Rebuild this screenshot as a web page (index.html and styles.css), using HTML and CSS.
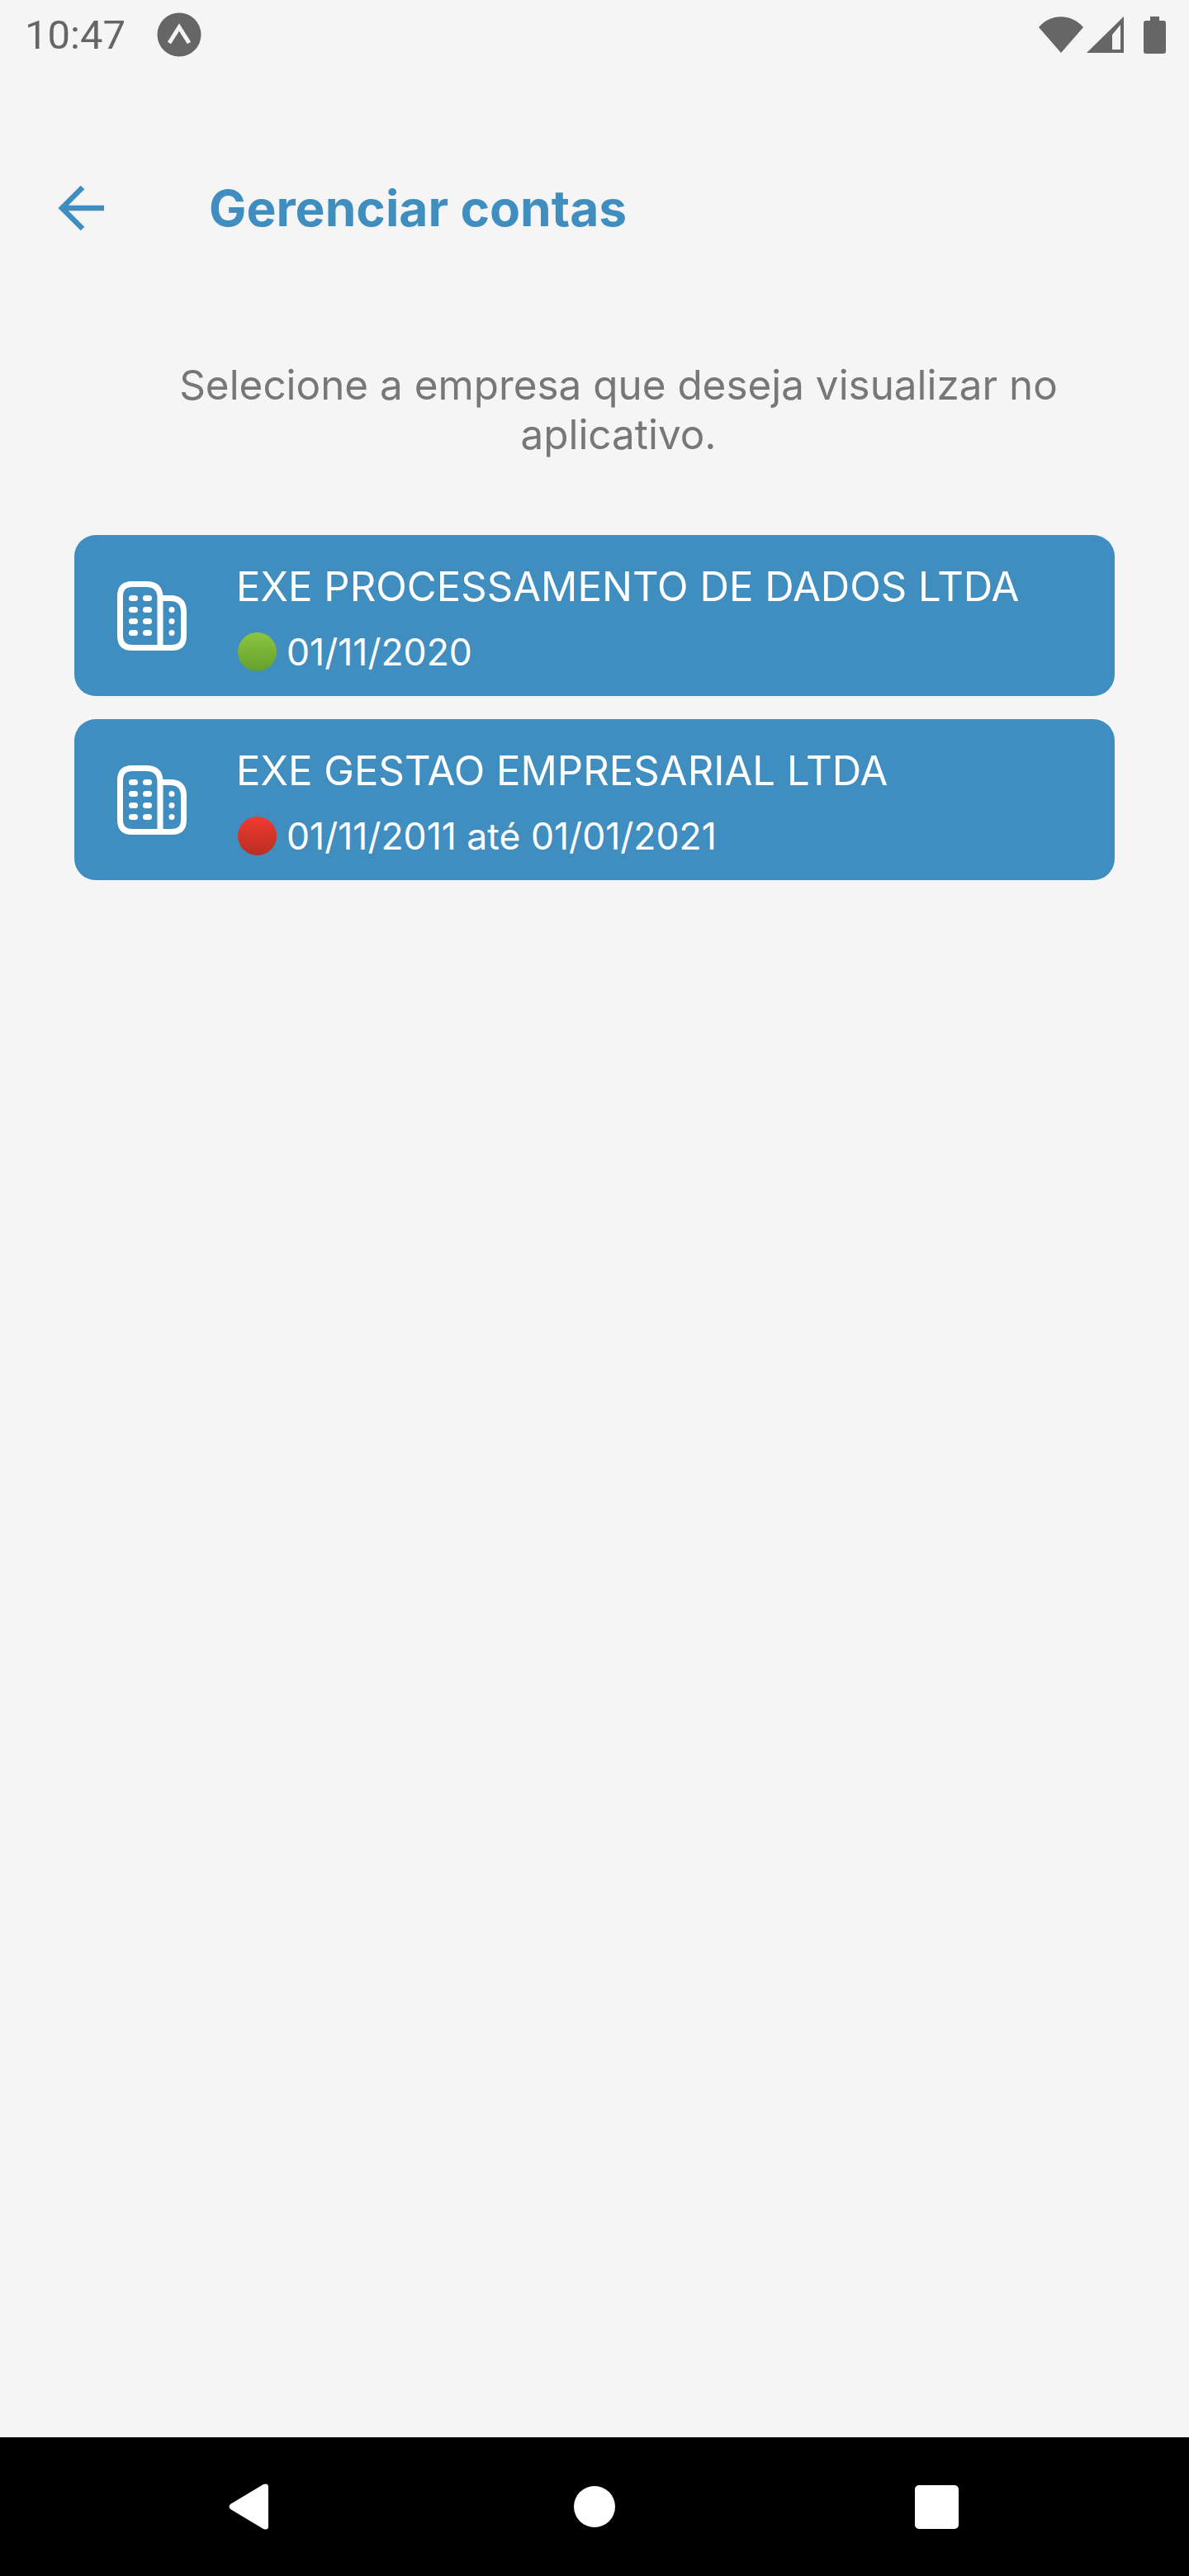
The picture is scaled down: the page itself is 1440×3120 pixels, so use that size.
FILE: index.html
```html
<!DOCTYPE html>
<html lang="pt-BR">
<head>
  <meta charset="UTF-8" />
  <meta name="viewport" content="width=device-width, initial-scale=1" />
  <link rel="stylesheet" href="styles.css">
</head>
<body>

  <div class="status-bar">
    <div class="status-left">
      <span class="clock">10:47</span>
      <svg class="expo-icon" viewBox="0 0 54 54">
        <circle cx="27" cy="27" r="26.5" fill="#666"/>
        <path d="M15 37 L27 18 L39 37" fill="none" stroke="#f5f5f5" stroke-width="5"/>
      </svg>
    </div>
    <div class="status-right">
      <svg class="wifi-icon" viewBox="0 0 54 44">
        <path d="M0 13 C15 -4 39 -4 54 13 L27 44 Z" fill="#666"/>
      </svg>
      <svg class="signal-icon" viewBox="0 0 45 44">
        <path fill-rule="evenodd" d="M45 0 V44 H0 Z M41 10 L31 22 V40 H41 Z" fill="#666"/>
      </svg>
      <svg class="battery-icon" viewBox="0 0 27 45">
        <path d="M8 0 H19 V5 H24 Q27 5 27 8 V42 Q27 45 24 45 H3 Q0 45 0 42 V8 Q0 5 3 5 H8 Z" fill="#666"/>
      </svg>
    </div>
  </div>

  <div class="top-bar">
    <svg class="back-icon" viewBox="0 0 56 56">
      <path d="M56 28 H5 M30 3 L5 28 L30 53" fill="none" stroke="#3f8ebf" stroke-width="6.5"/>
    </svg>
    <div class="page-title">Gerenciar contas</div>
  </div>

  <div class="intro">Selecione a empresa que deseja visualizar no aplicativo.</div>

  <div class="company-list">
    <div class="company-card">
      <svg class="building-icon" viewBox="0 0 84 84">
        <use href="#building"/>
      </svg>
      <div class="company-info">
        <div class="company-name">EXE PROCESSAMENTO DE DADOS LTDA</div>
        <div class="company-date"><span class="dot dot-green"></span>01/11/2020</div>
      </div>
    </div>
    <div class="company-card">
      <svg class="building-icon" viewBox="0 0 84 84">
        <use href="#building"/>
      </svg>
      <div class="company-info">
        <div class="company-name">EXE GESTAO EMPRESARIAL LTDA</div>
        <div class="company-date"><span class="dot dot-red"></span>01/11/2011 até 01/01/2021</div>
      </div>
    </div>
  </div>

  <div class="nav-bar">
    <svg class="nav-back" viewBox="0 0 48 56">
      <path d="M2 25 L42 1 Q48 -1 48 4 V52 Q48 57 42 55 L2 31 Q-1 28 2 25 Z" fill="#fff"/>
    </svg>
    <div class="nav-home"></div>
    <div class="nav-square"></div>
  </div>

  <svg class="svg-defs" width="0" height="0">
    <defs>
      <g id="building">
        <path d="M18 3.5 H35 Q52 3.5 52 20 V80.5 H18 Q3.5 80.5 3.5 66 V18 Q3.5 3.5 18 3.5 Z M52 20.5 H64 Q80.5 20.5 80.5 37 V66 Q80.5 80.5 66 80.5 H52" fill="none" stroke="#fff" stroke-width="7"/>
        <g fill="#fff">
          <rect x="14" y="17" width="11" height="7" rx="3.5"/>
          <rect x="31" y="17" width="11" height="7" rx="3.5"/>
          <rect x="14" y="31" width="11" height="7" rx="3.5"/>
          <rect x="31" y="31" width="11" height="7" rx="3.5"/>
          <rect x="14" y="45" width="11" height="7" rx="3.5"/>
          <rect x="31" y="45" width="11" height="7" rx="3.5"/>
          <rect x="14" y="59" width="11" height="7" rx="3.5"/>
          <rect x="31" y="59" width="11" height="7" rx="3.5"/>
          <circle cx="66" cy="34.5" r="3.5"/>
          <circle cx="66" cy="48.5" r="3.5"/>
          <circle cx="66" cy="62.5" r="3.5"/>
        </g>
      </g>
    </defs>
  </svg>

</body>
</html>
```

FILE: styles.css
```css
body {
  margin: 0;
  height: 3120px;
  display: flex;
  flex-direction: column;
  font-family: Inter, Roboto, sans-serif;
  background-color: #f5f5f5;
  overflow: hidden;
}

.svg-defs {
  display: none;
}

.status-bar {
  height: 84px;
  padding: 0 28px 0 30px;
  display: flex;
  justify-content: space-between;
  align-items: center;
  flex-shrink: 0;
}

.status-left {
  display: flex;
  align-items: center;
  gap: 38px;
}

.clock {
  font-family: Roboto, sans-serif;
  font-size: 49px;
  color: #666;
}

.expo-icon {
  width: 54px;
  height: 54px;
}

.status-right {
  display: flex;
  align-items: center;
  gap: 4px;
}

.wifi-icon {
  width: 54px;
  height: 44px;
}

.signal-icon {
  width: 45px;
  height: 44px;
}

.battery-icon {
  width: 27px;
  height: 45px;
  margin-left: 20px;
}

.top-bar {
  height: 168px;
  margin-top: 84px;
  padding-left: 70px;
  display: flex;
  align-items: center;
  flex-shrink: 0;
}

.back-icon {
  width: 56px;
  height: 56px;
}

.page-title {
  margin-left: 127px;
  font-weight: 700;
  font-size: 60.5px;
  color: #3f8ebf;
}

.intro {
  width: 1080px;
  margin: 100px 0 0 209px;
  text-align: center;
  font-size: 49.4px;
  line-height: 60px;
  color: #777;
}

.company-list {
  margin: 92px 90px 0;
  display: flex;
  flex-direction: column;
  gap: 28px;
}

.company-card {
  height: 195px;
  padding: 0 52px;
  display: flex;
  align-items: center;
  background-color: #3f8ebf;
  border-radius: 26px;
  color: white;
}

.building-icon {
  width: 84px;
  height: 84px;
  flex-shrink: 0;
}

.company-info {
  margin-left: 60px;
  padding-top: 3px;
}

.company-name {
  font-size: 49.1px;
  line-height: 60px;
}

.company-date {
  margin-top: 25px;
  display: flex;
  align-items: center;
  font-size: 44.5px;
  line-height: 50px;
}

.dot {
  width: 47px;
  height: 47px;
  margin: 0 12px 0 2px;
  border-radius: 50%;
}

.dot-green {
  background: linear-gradient(#8cc63f, #64a02e);
}

.dot-red {
  background: linear-gradient(#f23a2e, #b92d25);
}

.nav-bar {
  margin-top: auto;
  height: 168px;
  background-color: black;
  flex-shrink: 0;
  display: flex;
  align-items: center;
  padding-left: 277px;
}

.nav-back {
  width: 48px;
  height: 56px;
}

.nav-home {
  width: 50px;
  height: 50px;
  margin-left: 370px;
  background-color: white;
  border-radius: 50%;
}

.nav-square {
  width: 53px;
  height: 53px;
  margin-left: 363px;
  background-color: white;
  border-radius: 5px;
}
```
